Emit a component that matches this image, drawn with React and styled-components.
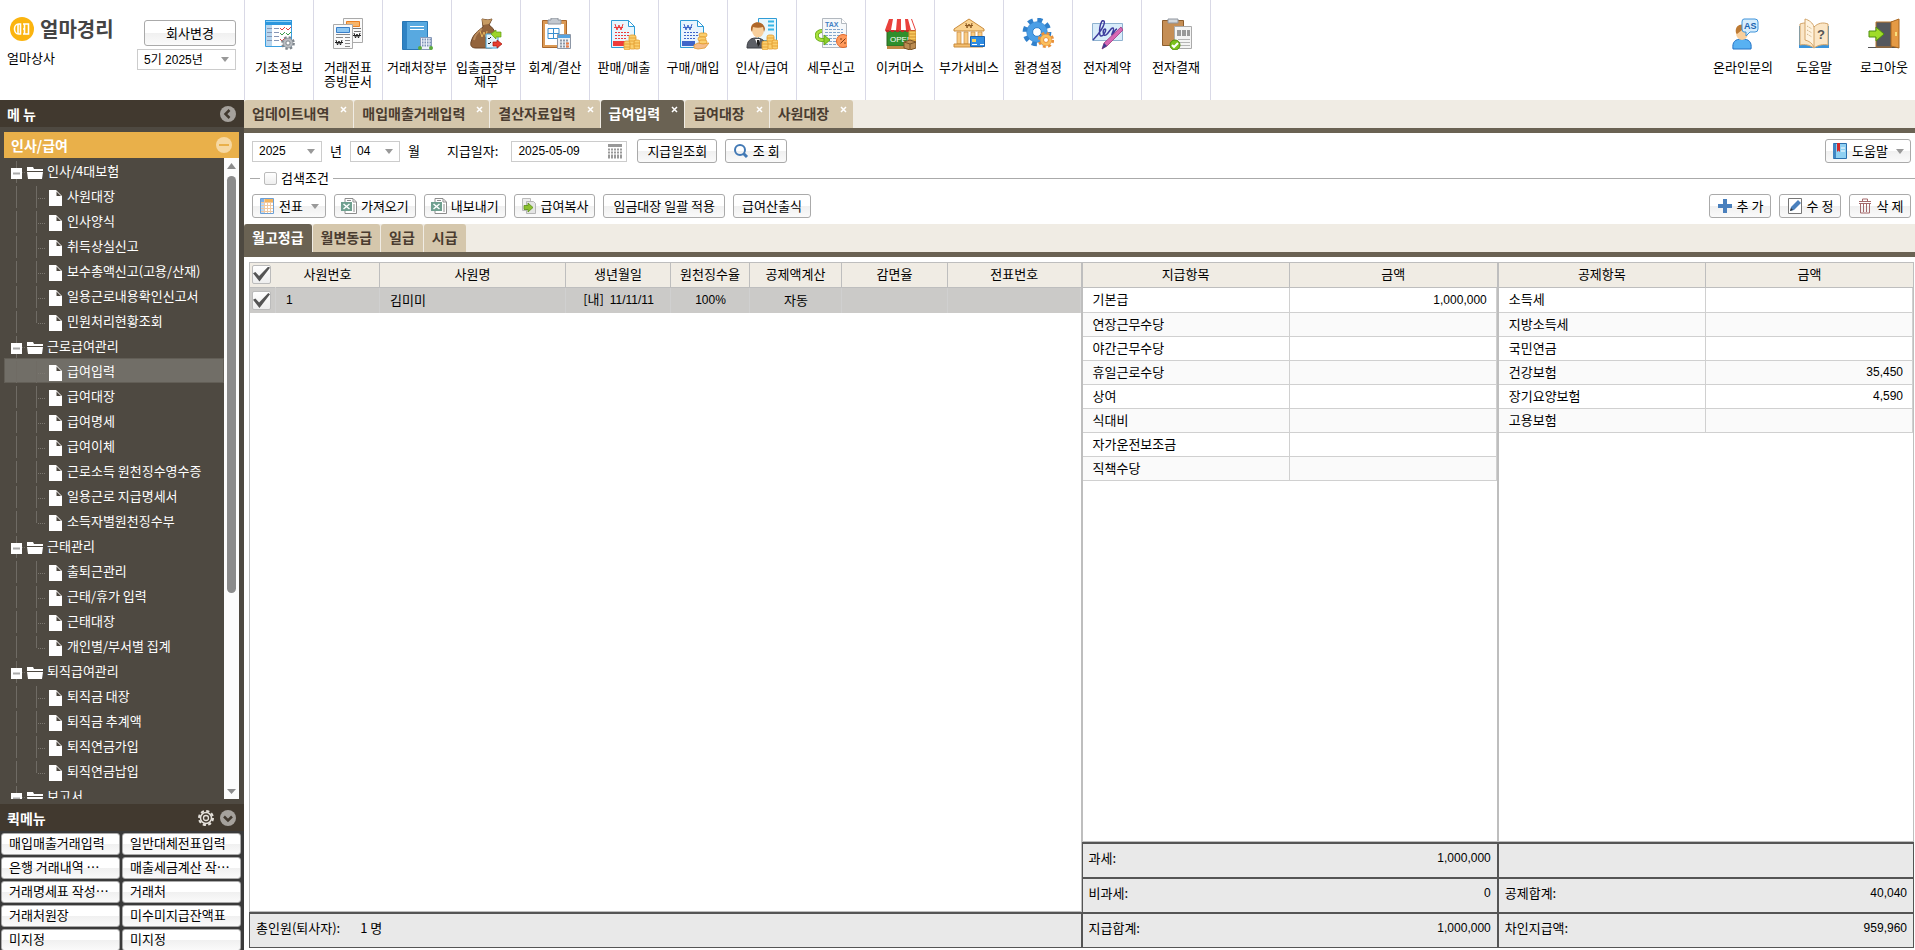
import styled, { createGlobalStyle, css } from 'styled-components';

const menus = [
  { label: '기초정보', icon: <BasicIcon /> },
  { label: '거래전표\n증빙문서', icon: <SlipIcon /> },
  { label: '거래처장부', icon: <LedgerIcon /> },
  { label: '입출금장부\n재무', icon: <MoneyBagIcon /> },
  { label: '회계/결산', icon: <ClosingIcon /> },
  { label: '판매/매출', icon: <SalesIcon /> },
  { label: '구매/매입', icon: <PurchaseIcon /> },
  { label: '인사/급여', icon: <PayrollIcon /> },
  { label: '세무신고', icon: <TaxIcon /> },
  { label: '이커머스', icon: <ShopIcon /> },
  { label: '부가서비스', icon: <BankIcon /> },
  { label: '환경설정', icon: <SettingsIcon /> },
  { label: '전자계약', icon: <SignIcon /> },
  { label: '전자결재', icon: <ApprovalIcon /> },
];

const helpMenus = [
  { label: '온라인문의', icon: <SupportIcon /> },
  { label: '도움말', icon: <ManualIcon /> },
  { label: '로그아웃', icon: <ExitIcon /> },
];

const tree = [
  {
    label: '인사/4대보험',
    items: [
      '사원대장',
      '인사양식',
      '취득상실신고',
      '보수총액신고(고용/산재)',
      '일용근로내용확인신고서',
      '민원처리현황조회',
    ],
  },
  {
    label: '근로급여관리',
    items: [
      '급여입력',
      '급여대장',
      '급여명세',
      '급여이체',
      '근로소득 원천징수영수증',
      '일용근로 지급명세서',
      '소득자별원천징수부',
    ],
  },
  { label: '근태관리', items: ['출퇴근관리', '근태/휴가 입력', '근태대장', '개인별/부서별 집계'] },
  { label: '퇴직급여관리', items: ['퇴직금 대장', '퇴직금 추계액', '퇴직연금가입', '퇴직연금납입'] },
  { label: '보고서', items: [] },
];

const quickMenus = [
  '매입매출거래입력',
  '일반대체전표입력',
  '은행 거래내역 ⋯',
  '매출세금계산 작⋯',
  '거래명세표 작성⋯',
  '거래처',
  '거래처원장',
  '미수미지급잔액표',
  '미지정',
  '미지정',
];

const tabs = ['업데이트내역', '매입매출거래입력', '결산자료입력', '급여입력', '급여대장', '사원대장'];
const payTabs = ['월고정급', '월변동급', '일급', '시급'];

const payments = [
  ['기본급', '1,000,000'],
  ['연장근무수당', ''],
  ['야간근무수당', ''],
  ['휴일근로수당', ''],
  ['상여', ''],
  ['식대비', ''],
  ['자가운전보조금', ''],
  ['직책수당', ''],
];

const deductions = [
  ['소득세', ''],
  ['지방소득세', ''],
  ['국민연금', ''],
  ['건강보험', '35,450'],
  ['장기요양보험', '4,590'],
  ['고용보험', ''],
];

function App() {
  return (
    <>
      <GlobalStyle />
      <Page>
        <Header />
        <Body>
          <Sidebar />
          <Main />
        </Body>
      </Page>
    </>
  );
}

export default App;

function Header() {
  return (
    <Top>
      <Company>
        <CompanyInfo>
          <Logo>
            <LogoIcon />
            얼마경리
          </Logo>
          <span>얼마상사</span>
        </CompanyInfo>
        <CompanyTools>
          <Button $width={92}>회사변경</Button>
          <Dropdown label="회계기수" value="5기 2025년" width={99} />
        </CompanyTools>
      </Company>
      <MenuBar>
        {menus.map((menu) => (
          <MenuItem href="#" key={menu.label}>
            {menu.icon}
            <span>{menu.label}</span>
          </MenuItem>
        ))}
      </MenuBar>
      <HelpBar>
        {helpMenus.map((menu) => (
          <HelpItem href="#" key={menu.label}>
            {menu.icon}
            <span>{menu.label}</span>
          </HelpItem>
        ))}
      </HelpBar>
    </Top>
  );
}

function Sidebar() {
  return (
    <Side>
      <SideHeader>
        <SideTitle>메 뉴</SideTitle>
        <IconButton aria-label="메뉴 접기">
          <RoundIcon d="M9.5 4 5.5 8l4 4" />
        </IconButton>
      </SideHeader>
      <Section>
        <SectionHeader>
          인사/급여
          <IconButton aria-label="닫기">
            <svg width="16" height="16" viewBox="0 0 16 16">
              <circle cx="8" cy="8" r="8" fill="#f6d8a2" />
              <path d="M3 8h10" stroke="#e9b04a" strokeWidth="2" />
            </svg>
          </IconButton>
        </SectionHeader>
        <SectionBody>
          <Tree>
            {tree.map((group) => (
              <li key={group.label}>
                <Folder href="#">
                  <FolderIcon />
                  {group.label}
                </Folder>
                {group.items.map((item, i) => (
                  <Leaf href="#" key={item} $active={item === '급여입력'}>
                    <LeafIcon last={i === group.items.length - 1} />
                    {item}
                  </Leaf>
                ))}
              </li>
            ))}
          </Tree>
          <Scrollbar>
            <ScrollArrow viewBox="0 0 15 18">
              <path d="M3 11h9L7.500 5z" />
            </ScrollArrow>
            <Track>
              <Thumb />
            </Track>
            <ScrollArrow viewBox="0 0 15 18">
              <path d="M3 8h9l-4.500 5z" />
            </ScrollArrow>
          </Scrollbar>
        </SectionBody>
      </Section>
      <SideHeader>
        <SideTitle>퀵메뉴</SideTitle>
        <SideTools>
          <IconButton aria-label="퀵메뉴 설정">
            <svg width="16" height="16" viewBox="0 0 16 16" fill="none" stroke="#e4e0da">
              <circle cx="8" cy="8" r="7" strokeWidth="2" strokeDasharray="3.200 2.300" />
              <circle cx="8" cy="8" r="5.500" strokeWidth="1.500" />
              <circle cx="8" cy="8" r="2.500" strokeWidth="1.300" />
            </svg>
          </IconButton>
          <IconButton aria-label="퀵메뉴 접기">
            <RoundIcon d="M4 6.500l4 4 4-4" />
          </IconButton>
        </SideTools>
      </SideHeader>
      <QuickMenu>
        {quickMenus.map((label, i) => (
          <QuickButton key={i}>{label}</QuickButton>
        ))}
      </QuickMenu>
    </Side>
  );
}

function Main() {
  return (
    <Content>
      <TabBar>
        {tabs.map((tab) => (
          <Tab key={tab} $active={tab === '급여입력'} $closable>
            {tab}
            <CloseIcon viewBox="0 0 7 7">
              <path d="M1 1l5 5M6 1L1 6" />
            </CloseIcon>
          </Tab>
        ))}
      </TabBar>

      <Filters>
        <Dropdown id="year" label="년" value="2025" width={70} />
        <label htmlFor="year">년</label>
        <Dropdown id="month" label="월" value="04" width={50} />
        <label htmlFor="month">월</label>
        <PayDateLabel htmlFor="pay-date">지급일자:</PayDateLabel>
        <DateBox>
          <DateInput id="pay-date" defaultValue="2025-05-09" />
          <CalendarIcon />
        </DateBox>
        <Button>지급일조회</Button>
        <Button $icon $width={62}>
          <SearchIcon />조 회
        </Button>
        <Spacer />
        <Button $icon>
          <BookmarkIcon />
          도움말
          <Arrow />
        </Button>
      </Filters>

      <Conditions>
        <Checkbox id="condition" type="checkbox" />
        <label htmlFor="condition">검색조건</label>
      </Conditions>

      <Toolbar>
        <Button $icon>
          <GridIcon />
          전표
          <Arrow />
        </Button>
        <Button $icon>
          <ExcelIcon />
          가져오기
        </Button>
        <Button $icon>
          <ExcelIcon />
          내보내기
        </Button>
        <Button $icon>
          <CopyIcon />
          급여복사
        </Button>
        <Button>임금대장 일괄 적용</Button>
        <Button $width={78}>급여산출식</Button>
        <Spacer />
        <Button $icon $width={62}>
          <PlusIcon />추 가
        </Button>
        <Button $icon $width={62}>
          <EditIcon />수 정
        </Button>
        <Button $icon $width={62}>
          <TrashIcon />삭 제
        </Button>
      </Toolbar>

      <TabBar>
        {payTabs.map((tab) => (
          <Tab key={tab} $active={tab === '월고정급'}>
            {tab}
          </Tab>
        ))}
      </TabBar>

      <Panes>
        <Pane>
          <PaneBody>
            <Table>
              <colgroup>
                <col width="26" />
                <col width="104" />
                <col width="186" />
                <col width="105" />
                <col width="79" />
                <col width="92" />
                <col width="106" />
                <col />
              </colgroup>
              <thead>
                <tr>
                  <Th $plain>
                    <Checkbox type="checkbox" aria-label="전체 선택" defaultChecked $large />
                  </Th>
                  <Th>사원번호</Th>
                  <Th>사원명</Th>
                  <Th>생년월일</Th>
                  <Th>원천징수율</Th>
                  <Th>공제액계산</Th>
                  <Th>감면율</Th>
                  <Th>전표번호</Th>
                </tr>
              </thead>
              <tbody>
                <SelectedRow>
                  <CheckCell>
                    <Checkbox type="checkbox" aria-label="김미미 선택" defaultChecked $large />
                  </CheckCell>
                  <Td>
                    <Num>1</Num>
                  </Td>
                  <Td>김미미</Td>
                  <Td $align="center">
                    [내]&nbsp; <Num>11/11/11</Num>
                  </Td>
                  <Td $align="center">
                    <Num>100%</Num>
                  </Td>
                  <Td $align="center">자동</Td>
                  <Td />
                  <Td />
                </SelectedRow>
              </tbody>
            </Table>
          </PaneBody>
          <Summary>
            <Headcount>
              <span>총인원(퇴사자):</span>
              <span>1 명</span>
            </Headcount>
          </Summary>
        </Pane>

        <Pane>
          <PaneBody>
            <AmountTable title="지급항목" rows={payments} />
          </PaneBody>
          <Summary>
            <Total label="과세:" value="1,000,000" />
            <Total label="비과세:" value="0" />
            <Total label="지급합계:" value="1,000,000" />
          </Summary>
        </Pane>

        <Pane>
          <PaneBody>
            <AmountTable title="공제항목" rows={deductions} />
          </PaneBody>
          <Summary>
            <Total />
            <Total label="공제합계:" value="40,040" />
            <Total label="차인지급액:" value="959,960" />
          </Summary>
        </Pane>
      </Panes>
    </Content>
  );
}

function Dropdown({ id, label, value, width }) {
  return (
    <SelectBox $width={width}>
      <Select id={id} aria-label={label} defaultValue={value}>
        <option>{value}</option>
      </Select>
      <Arrow />
    </SelectBox>
  );
}

function AmountTable({ title, rows }) {
  return (
    <Table>
      <thead>
        <tr>
          <Th>{title}</Th>
          <Th>금액</Th>
        </tr>
      </thead>
      <tbody>
        {rows.map(([name, amount]) => (
          <AmountRow key={name}>
            <Td>{name}</Td>
            <Td $align="right">
              <Num>{amount}</Num>
            </Td>
          </AmountRow>
        ))}
      </tbody>
    </Table>
  );
}

function Total({ label, value }) {
  return (
    <TotalRow>
      <span>{label}</span>
      <Num>{value}</Num>
    </TotalRow>
  );
}

/* small icons */

function Arrow() {
  return (
    <ArrowSvg viewBox="0 0 8 5">
      <path d="M0 0h8L4 5z" fill="#999" />
    </ArrowSvg>
  );
}

function LogoIcon() {
  return (
    <svg width="24" height="24" viewBox="0 0 24 24">
      <circle cx="12" cy="12" r="12" fill="#fbb40f" />
      <g fill="none" stroke="#fff" strokeWidth="1.600">
        <path d="M10.500 7H8.500a4 5 0 0 0 0 10h2z" />
        <path d="M8 7v10" />
        <path d="M13 7h5.500v10H13M14.500 7v10M13 12h2" />
      </g>
    </svg>
  );
}

function RoundIcon({ d }) {
  return (
    <svg width="16" height="16" viewBox="0 0 16 16">
      <circle cx="8" cy="8" r="8" fill="#a5a19c" />
      <path d={d} fill="none" stroke="#41392f" strokeWidth="2.500" />
    </svg>
  );
}

function FolderIcon() {
  return (
    <svg width="47" height="25" viewBox="0 0 47 25">
      <path d="M12.500 3v22" stroke="#6f6b64" />
      <path d="M18 14.500h4" stroke="#6f6b64" strokeDasharray="1 1" />
      <path d="M7 10h11v11H7z" fill="#fff" />
      <path d="M9 15.500h7" stroke="#a9a9a9" strokeWidth="2" />
      <path d="M23 9h6l1 2h9v2H23z" fill="#fff" />
      <path d="M23 14h16l-1 7H24z" fill="#fff" />
    </svg>
  );
}

function LeafIcon({ last }) {
  return (
    <svg width="63" height="25" viewBox="0 0 63 25">
      <path d="M12.500 3v22" stroke="#6f6b64" />
      <path d={last ? 'M32.500 3v12' : 'M32.500 3v22'} stroke="#6f6b64" />
      <path d="M34 15.500h7" stroke="#7c7871" strokeDasharray="1 1" />
      <path d="M45 7h7l6 6v10H45z" fill="#fff" />
      <path d="M52.500 8.500v4.500h4.500z" fill="#4e4941" />
    </svg>
  );
}

function CalendarIcon() {
  return (
    <svg width="16" height="16" viewBox="0 0 16 16" fill="#999">
      <path d="M1 1h14v3H1z" />
      <path
        d="M1 6.500h14M1 9.500h14M1 12.500h14M1 14.500h14"
        stroke="#999"
        strokeWidth="2"
        strokeDasharray="2 1"
      />
    </svg>
  );
}

function SearchIcon() {
  return (
    <svg width="16" height="16" viewBox="0 0 16 16" fill="none" stroke="#4279b5">
      <circle cx="7" cy="7" r="5" strokeWidth="2" />
      <path d="M10.500 10.500 14 14" strokeWidth="3" />
    </svg>
  );
}

function BookmarkIcon() {
  return (
    <svg width="16" height="16" viewBox="0 0 16 16">
      <path d="M1.500.500h13v15h-13z" fill="#8fd0f2" stroke="#2a6fae" />
      <path d="M1 1h3v14H1z" fill="#3f86c3" />
      <path d="M5 0h3v9L6.500 7.500 5 9z" fill="#d32a2a" />
      <path d="M9 5h4M9 8h4" stroke="#fff" />
    </svg>
  );
}

function GridIcon() {
  return (
    <svg width="16" height="16" viewBox="0 0 16 16">
      <path d="M2 1h12v14H2z" fill="#fff" />
      <path d="M2 1h12v3H2z" fill="#f2b35c" />
      <path d="M2 1h3v3H2z" fill="#7fb2e8" />
      <path d="M2 5h3v10H2z" fill="#bcd9f5" />
      <path d="M5.500 1v14M8.500 4v11M11.500 4v11M2 4.500h12M2 7.500h12M2 10.500h12M2 13.500h12" stroke="#f0c9a2" fill="none" />
      <path d="M1.500.500h13v15h-13z" fill="none" stroke="#6d9fd4" />
    </svg>
  );
}

function ExcelIcon() {
  return (
    <svg width="16" height="16" viewBox="0 0 16 16">
      <path d="M4 .500h8l3.500 3.500v11.500H4z" fill="#fff" stroke="#8d8d8d" />
      <path d="M12 1v3h3M13 6v8M6 2.500h4" stroke="#8d8d8d" fill="none" />
      <path d="M0 4h11v9H0z" fill="#6fa08f" />
      <path d="M2.500 6l6 5M8.500 6l-6 5" stroke="#fff" strokeWidth="1.500" />
    </svg>
  );
}

function CopyIcon() {
  return (
    <svg width="16" height="16" viewBox="0 0 16 16">
      <path d="M1.500.500h8v12h-8z" fill="#eee" stroke="#bbb" />
      <path d="M5.500 3.500h7l2 2v10h-9z" fill="#e4e4e4" stroke="#b5b5b5" />
      <path d="M3 7.500h4V5l5 4.500-5 4.500v-2.500H3z" fill="#8ac02e" stroke="#5c8f18" strokeWidth=".800" />
    </svg>
  );
}

function PlusIcon() {
  return (
    <svg width="16" height="16" viewBox="0 0 16 16">
      <path d="M6 1h4v5h5v4h-5v5H6v-5H1V6h5z" fill="#4a80bd" />
    </svg>
  );
}

function EditIcon() {
  return (
    <svg width="16" height="16" viewBox="0 0 16 16">
      <path d="M1.500.500h13v15h-13z" fill="#fff" stroke="#777" />
      <path d="M3 13l1-4 7-7 3 3-7 7z" fill="#4a80bd" />
      <path d="M3 13l1-3 2 2z" fill="#333" />
    </svg>
  );
}

function TrashIcon() {
  return (
    <svg width="16" height="16" viewBox="0 0 16 16" fill="none" stroke="#a4696b">
      <path d="M2 3.500h12M5.500 3v-2h5v2M3.500 6v9h9V6M6.500 6v8M9.500 6v8M2 5.500h12" />
    </svg>
  );
}

/* 32px menu icons */

function Gear({ x, y, r, fill, stroke, hole = '#fff' }) {
  return (
    <g transform={`translate(${x} ${y})`}>
      <circle
        r={r}
        fill="none"
        stroke={stroke}
        strokeWidth={r * 0.5}
        strokeDasharray={`${r * 0.42} ${r * 0.365}`}
      />
      <circle r={r * 0.9} fill={fill} stroke={stroke} strokeWidth=".600" />
      <circle r={r * 0.38} fill={hole} stroke={stroke} />
    </g>
  );
}

function Coins({ x, y }) {
  return (
    <g transform={`translate(${x} ${y})`} fill="#fbcf6e" stroke="#e29a2c" strokeWidth=".800">
      <rect x="5" y="0" width="7" height="14" rx="2" />
      <path d="M5 3h7M5 6h7M5 9h7" />
      <rect x="0" y="6" width="6" height="9" rx="2" />
      <path d="M0 9h6M0 12h6" />
      <rect x="10" y="5" width="6" height="9" rx="2" />
      <path d="M10 8h6M10 11h6" />
    </g>
  );
}

function MenuSvg({ children }) {
  return (
    <svg width="32" height="32" viewBox="0 0 32 32">
      {children}
    </svg>
  );
}

function BasicIcon() {
  return (
    <MenuSvg>
      <path d="M2.500 2.500h26v26h-26z" fill="#fff" stroke="#3a9fe0" />
      <path d="M2 2h27v5H2z" fill="#2d97dd" />
      <path d="M3 3h25v1H3z" fill="#8fd0f5" />
      <path d="M3 7h6v21H3z" fill="#b9d6ee" />
      <path d="M4 10.500h12M4 14.500h12M4 18.500h12M4 22.500h12" stroke="#8596b5" strokeDasharray="5 2" />
      <path d="M17 10l2 2 3-3M23 10l2 2 3-3M17 21l2 2 3-3" stroke="#e23a3a" fill="none" />
      <path d="M17 15l2 2 3-3M23 15l2 2 3-3" stroke="#3a9c4a" fill="none" />
      <Gear x={25} y={25} r={5.5} fill="#b9bdc2" stroke="#7e858c" />
    </MenuSvg>
  );
}

function SlipIcon() {
  return (
    <MenuSvg>
      <path d="M11.500.500h19v24h-19z" fill="#fafafa" stroke="#aaa" />
      <path d="M14.500 3.500h13v5h-13z" fill="#f7b469" stroke="#ea7f22" />
      <path d="M14 10.500h15M22 13.500h7" stroke="#777" />
      <path d="M22 15l1.500 5 1.500-4 1.500 4 1.500-5M21 17.500h8" stroke="#222" fill="none" />
      <path d="M1.500 6.500h19v24h-19z" fill="#fafafa" stroke="#aaa" />
      <path d="M4.500 9.500h13v5h-13z" fill="#8cc6f2" stroke="#3a7fc8" />
      <path d="M4 16.500h14M4 19.500h7M13 19.500h5M13 22.500h5M13 25.500h5M13 28.500h5" stroke="#888" />
      <path d="M4 22l1.500 5 1.500-4 1.500 4 1.500-5M3 24.500h8" stroke="#222" fill="none" />
    </MenuSvg>
  );
}

function LedgerIcon() {
  return (
    <MenuSvg>
      <path d="M1.500 3.500h25v28h-25z" fill="#58a9e0" stroke="#2a78b5" />
      <path d="M2 4h4v27H2z" fill="#2f83c4" />
      <path d="M9 8.500h14M9 11.500h14" stroke="#fff" />
      <path d="M19.500 19.500h11v12h-11z" fill="#eef3fa" stroke="#8799b8" />
      <path
        d="M21 21.500h9M21 24.500h9M21 27.500h9"
        stroke="#7f93b8"
        strokeWidth="2"
        strokeDasharray="1.500 1"
      />
      <circle cx="19" cy="30" r="2" fill="#5cab3c" />
      <circle cx="30" cy="30" r="2" fill="#5cab3c" />
    </MenuSvg>
  );
}

function MoneyBagIcon() {
  return (
    <MenuSvg>
      <path d="M12 1l6 1 4-1-3 6c5 3 9 11 8 18-1 4-4 5-8 5H6c-4 0-6-2-5-6 2-8 7-11 12-15z" fill="#93643c" stroke="#6a4526" />
      <path d="M12 1l6 1 4-1-3 5-6 1z" fill="#c79b62" />
      <path d="M4 22c1-6 5-9 8-11" stroke="#b98a5c" fill="none" strokeWidth="2" />
      <path d="M10 13l2 6 2-5 2 5 1-6" stroke="#e5b55c" fill="none" />
      <path d="M16 16h12v14H16z" fill="#e5f4fc" stroke="#3f9fd4" />
      <path d="M18 20l1 1 2-2M18 25l1 1 2-2" stroke="#222" fill="none" />
      <path d="M21 16l5-4v2h5v5h-5v2z" fill="#9cd42a" stroke="#5f9c12" strokeWidth=".700" />
      <path d="M32 26l-5-4v2h-4v4h4v2z" fill="#e83d2e" stroke="#a8160c" strokeWidth=".700" />
    </MenuSvg>
  );
}

function ClosingIcon() {
  return (
    <MenuSvg>
      <path d="M3.500 2.500h24v27h-24z" fill="#dc9a55" stroke="#a9662a" />
      <path d="M6 6h19v21H6z" fill="#fff" />
      <path d="M12 0h7v2h3v4H9V2h3z" fill="#c3c8cf" stroke="#8f959e" />
      <path d="M9 10.500h11v10H9zM9 15.500h11M14.500 10.500v10" stroke="#3a8fd0" fill="none" />
      <path d="M18.500 16.500h13v14h-13z" fill="#eef1f5" stroke="#8d97a6" />
      <path d="M19 17h12v3H19z" fill="#56a3e0" />
      <path d="M21 22.500h9M21 25.500h9M21 28.500h9" stroke="#8d97a6" strokeWidth="2" strokeDasharray="2 1" />
      <path d="M27 25.500h3M27 28.500h3" stroke="#ee7d44" strokeWidth="2" />
    </MenuSvg>
  );
}

function Invoice({ color }) {
  return (
    <>
      <path d="M3.500 2.500h17l6 6v21h-23z" fill="#e8f5fd" stroke="#2f9cd6" />
      <path d="M20.500 2.500v6h6z" fill="#fff" stroke="#2f9cd6" />
      <path d="M7 6l2 6 2-5 2 5 2-6M6 9.500h9" stroke={color} fill="none" />
      <path d="M7 14.500h15M7 17.500h15M7 20.500h11" stroke={color} strokeDasharray="2 1" />
      <path d="M5 23h13v5H5z" fill={color} />
    </>
  );
}

function SalesIcon() {
  return (
    <MenuSvg>
      <Invoice color="#ee3b3b" />
      <Coins x={16} y={17} />
    </MenuSvg>
  );
}

function PurchaseIcon() {
  return (
    <MenuSvg>
      <Invoice color="#3f66c9" />
      <g fill="#fbcf6e" stroke="#e29a2c" strokeWidth=".800">
        <rect x="22" y="15" width="8" height="4" rx="2" />
        <rect x="21" y="19" width="8" height="4" rx="2" />
        <rect x="22" y="22" width="8" height="4" rx="2" />
        <path d="M17 27l4-2 5 1 6-1-4 5-7 1-4-1z" fill="#f6bd8b" />
      </g>
    </MenuSvg>
  );
}

function PayrollIcon() {
  return (
    <MenuSvg>
      <path d="M12.500.500h18v22h-18z" fill="#e8f7fd" stroke="#2f9cd6" />
      <path d="M22 3.500h6M22 7.500h6M22 11.500h6" stroke="#35b6e6" strokeWidth="2" />
      <path d="M1 30c0-7 3-10 9-10s10 3 11 10z" fill="#5c5f66" stroke="#3b3e44" />
      <path d="M9 21h5l-2 7z" fill="#fff" />
      <path d="M11 22h2l1 4-2 3-1-3z" fill="#222" />
      <ellipse cx="12" cy="12" rx="6" ry="7.500" fill="#f8cf9c" />
      <path d="M5 12c-1-10 13-10 14-1l-1 3-1-5c-3 1-7 1-10 0l-1 5z" fill="#b0682a" />
      <Coins x={16} y={17} />
    </MenuSvg>
  );
}

function TaxIcon() {
  return (
    <MenuSvg>
      <path d="M7.500.500h19l5 5v24h-24z" fill="#f6f8fa" stroke="#b2b8bf" />
      <path d="M26.500.500v5h5" fill="#fff" stroke="#b2b8bf" />
      <text x="10" y="9" fontFamily="Liberation Sans" fontSize="7" fontWeight="bold" fill="#3f80c4">
        TAX
      </text>
      <path d="M10 11.500h18M10 14.500h18M10 17.500h18M10 20.500h12M10 23.500h12M10 26.500h12" stroke="#82a6cc" strokeDasharray="3 1" />
      <path d="M7 13c-7 0-7 9 0 9h2" fill="none" stroke="#62a718" strokeWidth="4" />
      <path d="M7 13c-7 0-7 9 0 9h2" fill="none" stroke="#a8e03c" strokeWidth="2.500" />
      <path d="M9 17l6 5-6 5z" fill="#8ed02a" stroke="#62a718" />
      <circle cx="28" cy="23" r="6.500" fill="#ff9a5c" stroke="#e0662a" />
      <path d="M30.500 20.500l-5 5M25 21h2M29 25h2" stroke="#7d3a12" />
    </MenuSvg>
  );
}

function ShopIcon() {
  return (
    <MenuSvg>
      <path d="M3 13h27v15H3z" fill="#2f8f2c" stroke="#2c6423" />
      <path d="M3 28h27v3H3z" fill="#c08a44" />
      <path d="M5 1h23l4 11H1z" fill="#e9413c" />
      <path d="M9 1h4l-1 11H7zM17 1h4l1 11h-5zM24 1h3l4 11h-4z" fill="#fff" />
      <path d="M1 12c1 3 4 3 5 0 1 3 4 3 5 0 1 3 4 3 5 0 1 3 4 3 5 0 1 3 4 3 5 0 1 3 4 3 6 0z" fill="#c22c28" />
      <text x="6" y="24" fontFamily="Liberation Sans" fontSize="8" fill="#fff">
        OPEN
      </text>
      <path d="M25 13h7v11h-7z" fill="#f7c85c" stroke="#cf9030" />
      <path d="M25 16h7M25 19h7M25 22h7" stroke="#cf9030" />
      <path d="M20 24l6-2 6 2v6l-6 2-6-2z" fill="#bb8c52" stroke="#7b5526" />
      <path d="M20 24l6 2 6-2M26 26v6" fill="none" stroke="#7b5526" />
    </MenuSvg>
  );
}

function BankIcon() {
  return (
    <MenuSvg>
      <path d="M1 11L16 1l15 10v2H1z" fill="#fbd390" stroke="#c98b3c" />
      <path d="M13 5l1 5 2-4 2 4 1-5M12 7.500h8" stroke="#8d5a22" fill="none" />
      <path d="M4 14h4v12H4zM11 14h4v12h-4zM18 14h4v12h-4zM25 14h4v12h-4z" fill="#f9cb84" stroke="#c98b3c" strokeWidth=".700" />
      <path d="M1 26h29v3H1z" fill="#f4bf70" stroke="#c98b3c" />
      <path d="M17.500 18.500h14v10h-14z" fill="#2f8be0" stroke="#1a62b0" />
      <path d="M19 21h4v3h-4z" fill="#fbd25c" />
      <path d="M19 26.500h5M27 26.500h4" stroke="#fff" />
    </MenuSvg>
  );
}

function SettingsIcon() {
  return (
    <MenuSvg>
      <Gear x={15} y={14} r={11.5} fill="#4c9fe6" stroke="#3181cc" />
      <Gear x={24} y={22} r={6.5} fill="#fbbf5c" stroke="#e8903a" />
    </MenuSvg>
  );
}

function SignIcon() {
  return (
    <MenuSvg>
      <path d="M1.500 5.500h30v17h-30z" fill="#d9ecfa" stroke="#8fb2d0" />
      <path
        d="M2 22C8 16 15 6 13 3 9 0 7 18 10 18c3 0 6-7 4-7-3 0-2 8 1 6s5-8 7-7-2 7-1 7 3-6 5-6"
        fill="none"
        stroke="#3c3a9c"
        strokeWidth="1.500"
      />
      <path d="M30 9l2 3-16 16-5 3 2-6z" fill="#d768b4" stroke="#9c3a80" strokeWidth=".800" />
      <path d="M13 25l3 3-5 3z" fill="#3f3b8c" />
    </MenuSvg>
  );
}

function ApprovalIcon() {
  return (
    <MenuSvg>
      <path d="M2.500 2.500h21v25h-21z" fill="#c58e55" stroke="#8d5d2c" />
      <path d="M8 1h10v4H8z" fill="#d4d8dc" stroke="#8f959e" />
      <path d="M14.500 8.500h17v22h-17z" fill="#f4f4f4" stroke="#aaa" />
      <path d="M17 12h4v6h-4zM22 12h4v6h-4zM27 12h3v6h-3z" fill="#999" />
      <path d="M18 21.500h12M18 24.500h12M18 27.500h12" stroke="#b5b5b5" />
      <circle cx="15" cy="27" r="5" fill="#7cc21e" stroke="#528c0c" />
      <path d="M12 27l2 2 4-4" stroke="#fff" strokeWidth="2" fill="none" />
    </MenuSvg>
  );
}

function SupportIcon() {
  return (
    <MenuSvg>
      <path d="M6 31c-1-7 2-10 9-10s10 3 9 10z" fill="#58b1f2" stroke="#2473c6" />
      <ellipse cx="15" cy="15" rx="6" ry="7" fill="#f9cf9c" />
      <path d="M9 15c-2-10 10-11 13-4l-7 1-5 4z" fill="#bd7a34" />
      <path d="M17 1h11q3 0 3 3v7q0 3-3 3h-5l-4 4v-4h-2q-2 0-2-3V4q0-3 2-3z" fill="#d7edfc" stroke="#3f93da" />
      <text x="17" y="11" fontFamily="Liberation Sans" fontSize="9" fontWeight="bold" fill="#1a64b0">
        AS
      </text>
    </MenuSvg>
  );
}

function ManualIcon() {
  return (
    <MenuSvg>
      <path d="M1 8h30v22H1z" fill="#3a94dc" />
      <path d="M2 6c5-2 10-1 14 3 4-4 9-5 14-3v21c-5-1-10 0-14 3-4-3-9-4-14-3z" fill="#fbe6c6" stroke="#d2a468" />
      <path d="M7 1c4 1 8 4 9 8v20c-2-4-5-6-9-7z" fill="#fff3df" stroke="#d2a468" />
      <path d="M9 8l5 3M9 12l5 3M9 16l5 3" stroke="#c7a46f" strokeDasharray="1 1" />
      <text x="19" y="21" fontFamily="Liberation Sans" fontSize="13" fontWeight="bold" fill="#555">
        ?
      </text>
    </MenuSvg>
  );
}

function ExitIcon() {
  return (
    <MenuSvg>
      <path d="M0 29.500h30" stroke="#555" />
      <path d="M8 4h16v25H8z" fill="#55585e" stroke="#b9772e" />
      <path d="M23 4l8-3v29l-8-2z" fill="#e59a44" stroke="#a9661e" />
      <path d="M27 14h2v4h-2z" fill="#fbe07c" />
      <path d="M1 13h7V9l8 7-8 7v-4H1z" fill="#a0dc28" stroke="#4f8f10" />
    </MenuSvg>
  );
}

const GlobalStyle = createGlobalStyle`
  * {
    box-sizing: border-box;
  }

  body {
    margin: 0;
    background: #fff;
    color: #000;
    font: 13px/14px 'Noto Sans CJK KR', sans-serif;
  }

  button, input, select {
    margin: 0;
    font: inherit;
    color: inherit;
  }

  a {
    color: inherit;
    text-decoration: none;
  }

  svg {
    flex: none;
  }
`;

const Page = styled.div`
  display: flex;
  flex-direction: column;
  height: 100vh;
  overflow: hidden;
`;

const Body = styled.div`
  flex: 1;
  min-height: 0;
  display: grid;
  grid-template-columns: 244px 1fr;
`;

const Button = styled.button`
  display: flex;
  align-items: center;
  justify-content: center;
  gap: 4px;
  height: 24px;
  width: ${(p) => (p.$width ? `${p.$width}px` : 'auto')};
  padding: ${(p) => (p.$icon ? '0 6px' : '0 9px')};
  border: 1px solid #aaa;
  border-radius: 3px;
  background: linear-gradient(#fff 50%, #f0f0f0 50%, #fafafa);
  white-space: nowrap;
  cursor: pointer;
`;

const IconButton = styled.button`
  display: flex;
  padding: 0;
  border: 0;
  background: none;
  cursor: pointer;
`;

const ArrowSvg = styled.svg`
  width: 8px;
  height: 5px;
  margin-left: 4px;
`;

const SelectBox = styled.div`
  position: relative;
  width: ${(p) => p.$width}px;
  height: 21px;

  ${ArrowSvg} {
    position: absolute;
    top: 8px;
    right: 7px;
    pointer-events: none;
  }
`;

const Select = styled.select`
  appearance: none;
  display: block;
  width: 100%;
  height: 100%;
  padding: 0 6px;
  border: 1px solid #ccc;
  border-radius: 0;
  background: #fff;
  font: 12px/14px 'Liberation Sans', 'Noto Sans CJK KR', sans-serif;
`;

const Num = styled.span`
  font: 12px/14px 'Liberation Sans', sans-serif;
`;

const Spacer = styled.div`
  flex: 1;
`;

const Top = styled.header`
  display: flex;
  height: 100px;
  background: #fff;
`;

const Company = styled.div`
  display: flex;
  justify-content: space-between;
  width: 244px;
  padding: 17px 8px 0 7px;
`;

const CompanyInfo = styled.div`
  display: flex;
  flex-direction: column;
  gap: 10px;
`;

const CompanyTools = styled.div`
  display: flex;
  flex-direction: column;
  align-items: flex-end;
  gap: 3px;
  padding-top: 3px;

  ${Button} {
    height: 26px;
  }
`;

const Logo = styled.div`
  display: flex;
  align-items: center;
  gap: 6px;
  padding-left: 3px;
  font-size: 20px;
  font-weight: bold;
  line-height: 24px;
  color: #444;
`;

const MenuBar = styled.nav`
  display: flex;
  border-left: 1px solid #d9d9e6;
`;

const menuLink = css`
  display: flex;
  flex-direction: column;
  align-items: center;
  gap: 10px;
  padding-top: 18px;
  text-align: center;
  white-space: pre;
`;

const MenuItem = styled.a`
  ${menuLink}
  width: 69px;
  border-right: 1px solid #d9d9e6;
`;

const HelpBar = styled.nav`
  display: grid;
  grid-template-columns: 64px 78px 62px;
  margin-left: auto;
`;

const HelpItem = styled.a`
  ${menuLink}
`;

const Side = styled.aside`
  display: flex;
  flex-direction: column;
  min-height: 0;
  background: #4e4941;
  color: #fff;
`;

const SideHeader = styled.div`
  display: flex;
  align-items: center;
  justify-content: space-between;
  flex: none;
  height: 27px;
  padding: 0 8px 0 7px;
  background: #41392f;
`;

const SideTitle = styled.strong`
  font-size: 14px;
`;

const SideTools = styled.div`
  display: flex;
  gap: 6px;
`;

const Section = styled.section`
  display: flex;
  flex-direction: column;
  flex: 1;
  min-height: 0;
  margin: 5px 5px 5px 4px;
`;

const SectionHeader = styled.div`
  display: flex;
  align-items: center;
  justify-content: space-between;
  flex: none;
  height: 26px;
  padding: 0 7px;
  background: #e9b04a;
  font-size: 14px;
  font-weight: bold;
`;

const SectionBody = styled.div`
  display: flex;
  flex: 1;
  min-height: 0;
`;

const Tree = styled.ul`
  flex: 1;
  margin: 0;
  padding: 0;
  overflow: hidden;
  list-style: none;
`;

const Folder = styled.a`
  display: flex;
  align-items: center;
  height: 25px;
  padding-top: 1px;
  line-height: 28px;
  white-space: nowrap;

  svg {
    margin: -1px -4px 0 0;
  }
`;

const Leaf = styled(Folder)`
  background: ${(p) => (p.$active ? '#716e67' : 'none')};
  box-shadow: ${(p) => (p.$active ? 'inset 0 0 0 1px #625e56' : 'none')};

  svg {
    margin-right: 0;
  }
`;

const Scrollbar = styled.div`
  display: flex;
  flex-direction: column;
  width: 15px;
  background: #fcfcfc;
`;

const ScrollArrow = styled.svg`
  width: 15px;
  height: 18px;
  fill: #8b8b8b;
`;

const Track = styled.div`
  flex: 1;
  padding: 0 3px;
`;

const Thumb = styled.div`
  height: 69%;
  border-radius: 5px;
  background: #8b8b8b;
`;

const QuickMenu = styled.div`
  display: grid;
  grid-template-columns: 1fr 1fr;
  gap: 2px;
  flex: none;
  height: 119px;
  padding: 2px 3px 0 1px;
  overflow: hidden;
  background: #3a3a3a;
`;

const QuickButton = styled.button`
  height: 22px;
  padding: 0 7px 2px;
  border: 1px solid #aaa;
  border-radius: 3px;
  background: linear-gradient(#fff 50%, #f0f0f0 50%, #fafafa);
  color: #000;
  text-align: left;
  white-space: nowrap;
`;

const Content = styled.main`
  display: flex;
  flex-direction: column;
  min-width: 0;
  min-height: 0;
`;

const TabBar = styled.div`
  display: flex;
  gap: 1px;
  flex: none;
  height: 33px;
  border-bottom: 5px solid #6a6253;
  background: #f0ece4;
`;

const Tab = styled.button`
  display: flex;
  align-items: center;
  gap: 11px;
  padding: ${(p) => (p.$closable ? '0 6px 2px 8px' : '0 8px 2px')};
  border: 0;
  border-radius: 3px 3px 0 0;
  background: ${(p) => (p.$active ? '#6a6253' : '#d5c7ac')};
  color: ${(p) => (p.$active ? '#fff' : '#4a3c30')};
  font-size: 14px;
  font-weight: bold;
  white-space: nowrap;
  cursor: pointer;
`;

const CloseIcon = styled.svg`
  width: 7px;
  height: 7px;
  margin-bottom: 7px;
  fill: none;
  stroke: #fff;
  stroke-width: 1.5;
`;

const Filters = styled.div`
  display: flex;
  align-items: center;
  gap: 8px;
  flex: none;
  padding: 6px 4px 0 8px;
`;

const PayDateLabel = styled.label`
  padding: 0 5px 0 19px;
`;

const DateBox = styled.div`
  display: flex;
  align-items: center;
  width: 116px;
  height: 21px;
  margin-right: 2px;
  padding-right: 3px;
  border: 1px solid #ccc;
`;

const DateInput = styled.input`
  flex: 1;
  min-width: 0;
  padding: 0 6px;
  border: 0;
  background: none;
  font: 12px/14px 'Liberation Sans', sans-serif;
`;

const Conditions = styled.div`
  display: flex;
  align-items: center;
  gap: 4px;
  flex: none;
  height: 31px;
  padding-left: 6px;

  &::before,
  &::after {
    content: '';
    width: 10px;
    height: 1px;
    background: #aaa;
  }

  &::after {
    flex: 1;
  }

  label {
    padding-bottom: 2px;
  }
`;

const Checkbox = styled.input`
  appearance: none;
  display: grid;
  place-items: center;
  width: ${(p) => (p.$large ? '19px' : '13px')};
  height: ${(p) => (p.$large ? '19px' : '13px')};
  border: 1px solid #bbb;
  border-radius: 2px;
  background: linear-gradient(#fff, #eee);

  &:checked::before {
    content: '';
    width: 17px;
    height: 15px;
    background: #555;
    clip-path: polygon(0 45%, 14% 36%, 36% 64%, 90% 0, 100% 8%, 38% 100%);
  }
`;

const Toolbar = styled.div`
  display: flex;
  gap: 8px;
  flex: none;
  padding: 0 4px 6px 8px;
`;

const Panes = styled.div`
  display: grid;
  grid-template-columns: 2fr 1fr 1fr;
  flex: 1;
  min-height: 0;
  padding: 5px 1px 2px 5px;
`;

const Pane = styled.section`
  display: flex;
  flex-direction: column;
  min-width: 0;
`;

const PaneBody = styled.div`
  flex: 1;
  min-height: 0;
  border: 1px solid #bebebe;
`;

const Table = styled.table`
  width: 100%;
  table-layout: fixed;
  border-spacing: 0;
`;

const Th = styled.th`
  height: 25px;
  padding: 0 0 2px;
  border-right: 1px solid ${(p) => (p.$plain ? 'transparent' : '#bebebe')};
  border-bottom: 1px solid #bebebe;
  background: #f0ece4;
  font-weight: normal;

  &:last-child {
    border-right: 0;
  }

  ${Checkbox} {
    margin: 0 auto 0 2px;
  }
`;

const Td = styled.td`
  height: 24px;
  padding: 0 9px 2px 10px;
  border-right: 1px solid #d0d0d0;
  text-align: ${(p) => p.$align || 'left'};
  white-space: nowrap;

  &:empty {
    padding: 0;
  }
`;

const CheckCell = styled.td`
  padding: 0 0 0 2px;
  border-right: 1px solid #d0d0d0;
`;

const SelectedRow = styled.tr`
  height: 25px;
  background: #cbcac8;
`;

const AmountRow = styled.tr`
  background: #fff;

  &:nth-child(even) {
    background: #fafafa;
  }

  ${Td} {
    border-bottom: 1px solid #d0d0d0;
  }

  &:first-child ${Td} {
    height: 25px;
  }
`;

const Summary = styled.div`
  flex: none;
  border: 1px solid #555;
  border-top: 0;
`;

const totalLine = css`
  display: flex;
  height: 35px;
  padding: 7px 6px 0;
  border-top: 2px solid #555;
  background: #e9e9e9;
`;

const TotalRow = styled.div`
  ${totalLine}
  justify-content: space-between;
`;

const Headcount = styled.div`
  ${totalLine}
  gap: 20px;
`;
